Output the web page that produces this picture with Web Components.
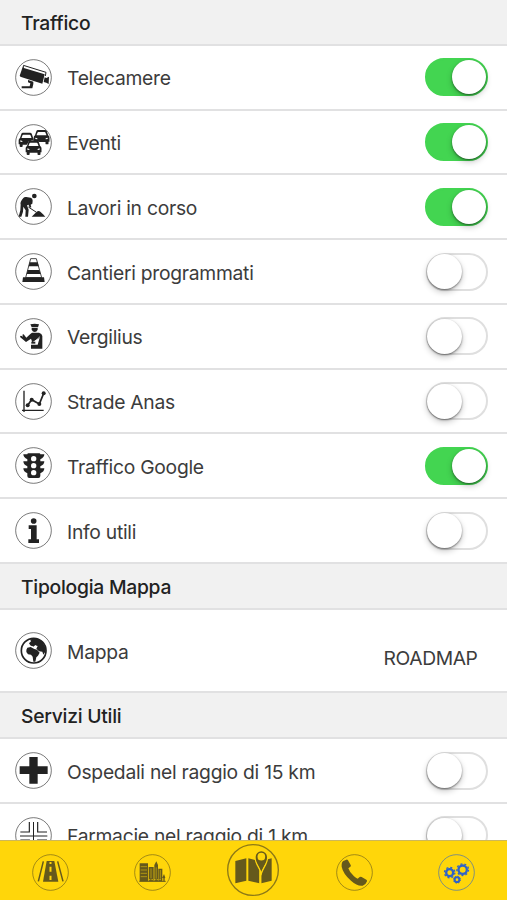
<!DOCTYPE html>
<html lang="it">
<head>
<meta charset="utf-8">
<title>Impostazioni mappa</title>
<style>
  body {
    margin: 0;
    font-family: Inter, Roboto, "Liberation Sans", sans-serif;
    font-size: 19.3px;
    color: #3c3c3c;
    background: #fff;
  }
</style>
</head>
<body>
<settings-page>
  <section-title>Traffico</section-title>
  <setting-row><round-icon slot="icon" name="camera"></round-icon>Telecamere<toggle-switch slot="end" on></toggle-switch></setting-row>
  <setting-row><round-icon slot="icon" name="cars"></round-icon>Eventi<toggle-switch slot="end" on></toggle-switch></setting-row>
  <setting-row><round-icon slot="icon" name="worker"></round-icon>Lavori in corso<toggle-switch slot="end" on></toggle-switch></setting-row>
  <setting-row><round-icon slot="icon" name="cone"></round-icon>Cantieri programmati<toggle-switch slot="end"></toggle-switch></setting-row>
  <setting-row><round-icon slot="icon" name="officer"></round-icon>Vergilius<toggle-switch slot="end"></toggle-switch></setting-row>
  <setting-row><round-icon slot="icon" name="chart"></round-icon>Strade Anas<toggle-switch slot="end"></toggle-switch></setting-row>
  <setting-row><round-icon slot="icon" name="lights"></round-icon>Traffico Google<toggle-switch slot="end" on></toggle-switch></setting-row>
  <setting-row><round-icon slot="icon" name="info"></round-icon>Info utili<toggle-switch slot="end"></toggle-switch></setting-row>

  <section-title>Tipologia Mappa</section-title>
  <setting-row tall><round-icon slot="icon" name="globe"></round-icon>Mappa<map-type slot="end">ROADMAP</map-type></setting-row>

  <section-title>Servizi Utili</section-title>
  <setting-row><round-icon slot="icon" name="hospital"></round-icon>Ospedali nel raggio di 15 km<toggle-switch slot="end"></toggle-switch></setting-row>
  <setting-row><round-icon slot="icon" name="pharmacy"></round-icon>Farmacie nel raggio di 1 km<toggle-switch slot="end"></toggle-switch></setting-row>

  <tab-bar slot="tabs">
    <round-icon name="road"></round-icon>
    <round-icon name="city"></round-icon>
    <round-icon name="map" large></round-icon>
    <round-icon name="phone"></round-icon>
    <round-icon name="gears" active></round-icon>
  </tab-bar>
</settings-page>

<script>
// front view of a car, used three times in the "cars" icon
const car = (x, y) => `
  <g transform="translate(${x} ${y})">
    <path fill="#fff" d="M10 2h27l9 18v24H0V20z"/>
    <path d="M13 1h21q4 0 5.500 4l4 12q4 3 4 7v12h-3v6q0 2-3 2h-3q-3 0-3-2v-5H12v5q0 2-3 2H6q-3 0-3-2v-6H0V24q0-4 4-7l4-12q1-4 5-4zm1 6q-2 0-2.500 2l-3 8h30l-3-8q-.5-2-2.500-2zM5 24v4l6 1v-3zm37 0-6 2v3l6-1z" fill-rule="evenodd"/>
  </g>`;

// all icons are drawn on a 111 unit circle, the map one on 156
const icons = {
  camera: `
    <path d="M25 19 93 40 91 51" fill="none" stroke="currentColor" stroke-width="3"/>
    <path d="M25 18 14 50 18 53 27 24z"/>
    <path d="M24 26 89 46 82 74 16 53z"/>
    <path d="M89 55l5 2 8-4-1 22-7-4-8-2z"/>
    <path d="M39 63l16 5v7l-3 13H20v-6h24l2-9-7-3z"/>`,
  cars: car(11, 25) + car(56, 17) + car(32, 49),
  worker: `
    <circle cx="58" cy="24" r="7"/>
    <path d="M25 30q3-4 9-3l13 2q6 2 6 9l-1 9-5 3 2 8-5 1-4-10-4 3 5 13-2 21h-8l1-19-7-11-1 15-5 15h-8l5-19 1-17q-3-8 8-20z"/>
    <path d="M31 34h15l2 10-10 8-11-5z"/>
    <path d="M40 57l23 15" stroke="currentColor" stroke-width="3"/>
    <path d="M50 86l9-9 6-6q6-4 11 0l8 8 7 7z"/>`,
  cone: `
    <path d="M47 17h17l16 57H32z" fill="#fff" stroke="currentColor" stroke-width="2.500"/>
    <path d="M44 28h24l3 12H41zM38 51h35l4 12H35z"/>
    <path d="M24 73h63l2 14H22z"/>`,
  officer: `
    <path d="M46 19l13-2 13 2-3 9H50z"/>
    <path d="M50 30h18v5q-3 7-9 7t-9-7z"/>
    <path d="M51 44h21q9 2 10 10v38H48V80h20l6-21-22 14-4-11-15 10-18-15q1-5 5-3l4 2-2-6 4-1 8 10 12-11z"/>
    <path d="M75 56 53 75" stroke="#fff" stroke-width="2"/>
    <path d="M49 71h12v6H49z"/>`,
  chart: `
    <g fill="none" stroke="currentColor" stroke-width="4">
      <path d="M27 23v64M21 82h65"/>
      <path d="M38 67 50 50 73 63 86 31" stroke-width="5"/>
    </g>
    <circle cx="38" cy="67" r="6"/><circle cx="50" cy="50" r="6"/>
    <circle cx="73" cy="63" r="6"/><circle cx="86" cy="31" r="6"/>`,
  lights: `
    <path d="M40 19h33q3 0 3 3h12q0 9-12 15v6h12q0 10-12 15v6h12q0 10-12 15v8q0 6-6 6H43q-6 0-6-6v-8q-12-5-12-15h12v-6q-12-5-12-15h12v-6q-12-6-12-15h12q0-3 3-3z"/>
    <g fill="#fff"><circle cx="56" cy="35" r="8"/><circle cx="56" cy="56" r="8"/><circle cx="56" cy="77" r="8"/></g>`,
  info: `
    <circle cx="56" cy="27" r="8.500"/>
    <path d="M41 40h24v42h7v11H40V82h8V51h-7z"/>`,
  globe: `
    <circle cx="56" cy="56" r="37" fill="none" stroke="currentColor" stroke-width="5"/>
    <path d="M48 22l12-3q14 1 23 12 9 12 9 27l-7 10-3-9-10-1-8-8 4-8-8-2-4 4-9-3-5-7 6-6-3-6z"/>
    <path d="M37 47l10-2 11 6 8 2 8 9-5 9-5 5-3 13h-6l-2-15-5-6-9-1-5-7q-1-8 3-13z"/>
    <path d="M47 42l8 4 8-5" fill="none" stroke="#fff" stroke-width="3"/>`,
  hospital: `<path d="M43 15h25v28h30v23H68v29H43V66H14V43h29z"/>`,
  pharmacy: `
    <g fill="none" stroke="currentColor" stroke-width="3.500">
      <path d="M55.500 15v82M15 57h82" stroke-width="3"/>
      <path d="M43 15v30H16M68 15v30h28M43 98V69H16M68 98V69h28"/>
    </g>`,
  road: `
    <path d="M44 21h23l12 62H33z"/>
    <path d="M34 22 19 82M77 22l16 60" stroke="currentColor" stroke-width="4.500"/>
    <path d="M55.500 24v6M55.500 38v15M55.500 65v13" stroke="#ffd60a" stroke-width="6"/>`,
  city: `
    <path d="M17 28h25v54H17zM44 39h15v43H44zM61 33l6-11 5 11v49H61zM73 44h12v38H73zM88 82v-9l-3-2 5-11 4 11-2 2v9z"/>
    <path d="M20 38h19M20 48h19M20 58h19M20 68h19M51 43v30M66.500 40v34M79 48v26" stroke="#ffd60a" stroke-width="1.800" opacity="0.800"/>
    <path d="M44 77h40" stroke="#ffd60a" stroke-width="2" stroke-dasharray="5 3"/>
    <path d="M16 82h79" stroke="currentColor" stroke-width="3"/>`,
  map: `
    <path d="M25 51l33-8v67l-33 8zM64 43l33 8v67l-33-8zM103 51l31-8v67l-31 8z"/>
    <path d="M103 87C98 71 85 58 85 41a18 18 0 0 1 36 0c0 17-13 30-18 46z" stroke="#ffd60a" stroke-width="5"/>
    <path d="M100 82v37" stroke="#ffd60a" stroke-width="5"/>
    <path d="M103 83C99 69 86 57 86 39a17 17 0 0 1 34 0c0 18-13 30-17 44z"/>
    <circle cx="103" cy="38" r="11.500" fill="#ffd60a"/>`,
  phone: `
    <path d="M22 21l9-4q3-1 5 2l8 14q2 3-1 5l-6 5q4 13 17 24 6 5 11 7l6-5q3-2 6 0l14 8q3 2 2 5-3 10-13 13-15 3-35-15Q21 59 17 38q-1-13 5-17z"/>`,
  gears: `
    <g fill="none" stroke="currentColor">
      <circle cx="35" cy="56" r="10.500" stroke-width="7"/>
      <circle cx="35" cy="56" r="15.500" stroke-width="4" stroke-dasharray="6.090 6.090"/>
      <circle cx="74" cy="47" r="12.500" stroke-width="7"/>
      <circle cx="74" cy="47" r="17.500" stroke-width="4" stroke-dasharray="6.110 6.110"/>
      <circle cx="57" cy="77" r="7" stroke-width="6"/>
      <circle cx="57" cy="77" r="10.500" stroke-width="3" stroke-dasharray="4.120 4.120"/>
    </g>`
};

class RoundIcon extends HTMLElement {
  constructor() {
    super();
    this.attachShadow({ mode: "open" });
  }

  connectedCallback() {
    const size = this.hasAttribute("large") ? 156 : 111;
    const c = size / 2;
    this.shadowRoot.innerHTML = `
      <style>
        :host {
          display: block;
          width: 37px;
          height: 37px;
          color: #222;
          flex: none;
        }
        :host([large]) {
          width: 52px;
          height: 52px;
        }
        svg {
          display: block;
          width: 100%;
          height: 100%;
          fill: currentColor;
        }
        .ring {
          fill: none;
          stroke: currentColor;
          stroke-width: 3;
          opacity: 0.6;
        }
        :host([large]) .ring {
          stroke-width: 4;
          opacity: 0.75;
        }
      </style>
      <svg viewBox="0 0 ${size} ${size}">
        <circle class="ring" cx="${c}" cy="${c}" r="${c - 2}"/>
        ${icons[this.getAttribute("name")]}
      </svg>`;
  }
}
customElements.define("round-icon", RoundIcon);

class ToggleSwitch extends HTMLElement {
  constructor() {
    super();
    this.attachShadow({ mode: "open" }).innerHTML = `
      <style>
        :host {
          display: flex;
          align-items: center;
          box-sizing: border-box;
          width: 62px;
          height: 38px;
          padding: 0 1px;
          border: 2px solid #dfdfdf;
          border-radius: 19px;
          background: #fff;
        }
        span {
          width: 35px;
          height: 35px;
          flex: none;
          margin-left: -2px;
          border-radius: 50%;
          background: #fff;
          box-shadow: 0 1px 2px rgba(0, 0, 0, 0.45), 0 3px 6px rgba(0, 0, 0, 0.22);
        }
        :host([on]) {
          justify-content: flex-end;
          width: 63px;
          border-color: #43d551;
          background: #43d551;
        }
        :host([on]) span {
          width: 34px;
          height: 34px;
          margin-right: -1px;
        }
      </style>
      <span></span>`;
  }
}
customElements.define("toggle-switch", ToggleSwitch);

class MapType extends HTMLElement {
  constructor() {
    super();
    this.attachShadow({ mode: "open" }).innerHTML = `
      <style>
        :host {
          display: block;
          padding: 14px 10px 0 0;
          letter-spacing: -0.4px;
        }
      </style>
      <slot></slot>`;
  }
}
customElements.define("map-type", MapType);

class SectionTitle extends HTMLElement {
  constructor() {
    super();
    this.attachShadow({ mode: "open" }).innerHTML = `
      <style>
        :host {
          display: flex;
          align-items: center;
          box-sizing: border-box;
          height: 45.9px;
          padding: 2px 21px 0;
          border-bottom: 2px solid #e1e1e2;
          background: #f1f1f1;
          color: #222;
          font-weight: 500;
          letter-spacing: -0.25px;
        }
      </style>
      <slot></slot>`;
  }
}
customElements.define("section-title", SectionTitle);

class SettingRow extends HTMLElement {
  constructor() {
    super();
    this.attachShadow({ mode: "open" }).innerHTML = `
      <style>
        :host {
          display: flex;
          align-items: center;
          box-sizing: border-box;
          height: 64.75px;
          padding: 0 19.5px 0 15.200px;
          border-bottom: 2px solid #e1e1e2;
          background: #fff;
        }
        :host([tall]) {
          height: 83.600px;
        }
        .label {
          flex: 1;
          padding: 2px 0 0 14.800px;
          white-space: nowrap;
          letter-spacing: -0.27px;
        }
      </style>
      <slot name="icon"></slot>
      <div class="label"><slot></slot></div>
      <slot name="end"></slot>`;
  }
}
customElements.define("setting-row", SettingRow);

class TabBar extends HTMLElement {
  constructor() {
    super();
    this.attachShadow({ mode: "open" }).innerHTML = `
      <style>
        :host {
          display: grid;
          grid-template-columns: repeat(5, 1fr);
          place-items: center;
          box-sizing: border-box;
          height: 60px;
          border-top: 1px solid #cdb75a;
          background: #ffd60a;
        }
        ::slotted(round-icon) {
          color: #65591c;
          margin-top: 4px;
        }
        ::slotted([large]) {
          margin-top: -1px;
        }
        ::slotted([active]) {
          color: #2f63c8;
        }
      </style>
      <slot></slot>`;
  }
}
customElements.define("tab-bar", TabBar);

class SettingsPage extends HTMLElement {
  constructor() {
    super();
    this.attachShadow({ mode: "open" }).innerHTML = `
      <style>
        :host {
          display: flex;
          flex-direction: column;
          height: 100vh;
          overflow: hidden;
        }
        main {
          flex: 1;
          min-height: 0;
          overflow: hidden;
        }
      </style>
      <main><slot></slot></main>
      <slot name="tabs"></slot>`;
  }
}
customElements.define("settings-page", SettingsPage);
</script>
</body>
</html>
